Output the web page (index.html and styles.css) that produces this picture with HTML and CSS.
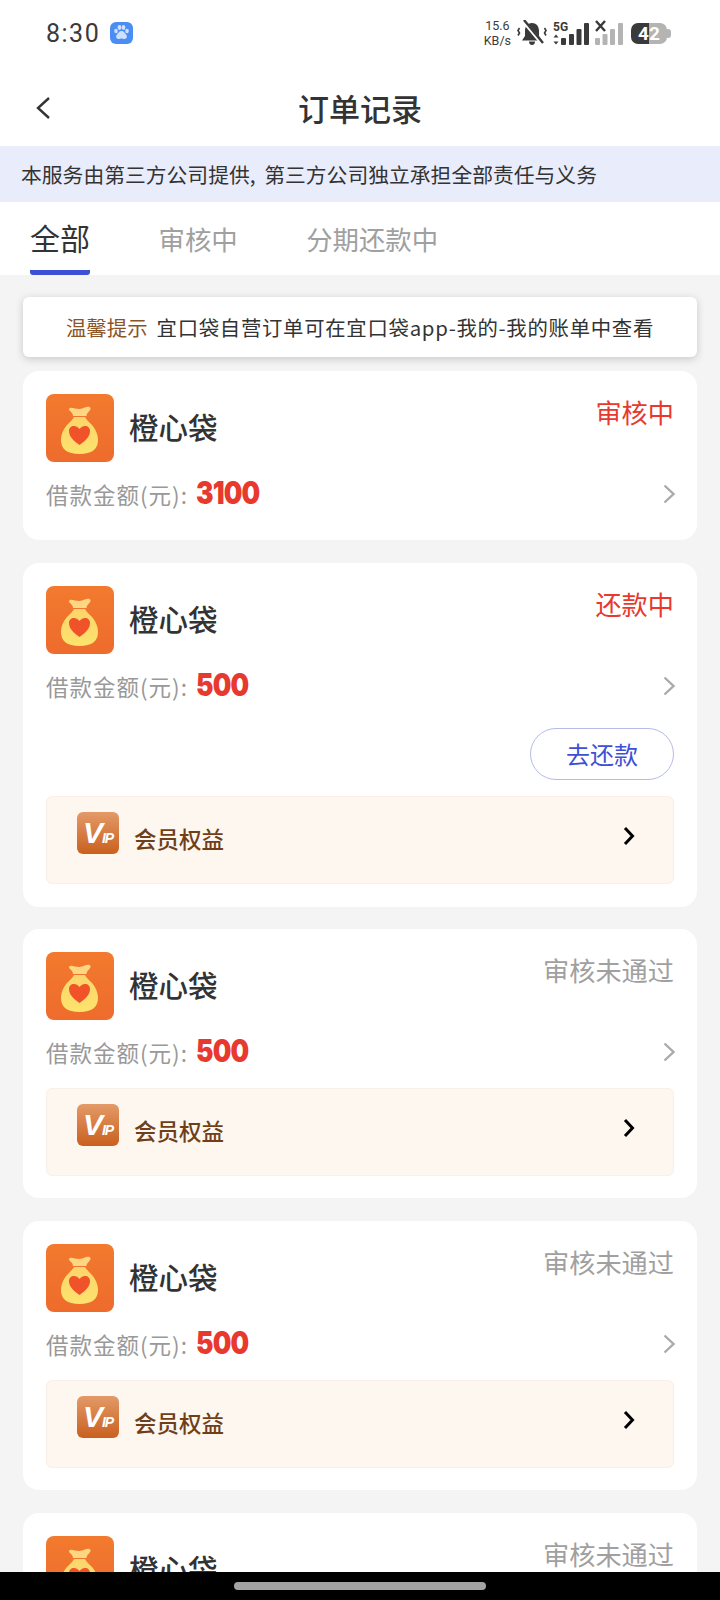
FILE: index.html
```html
<!DOCTYPE html>
<html lang="zh-CN">
<head>
<meta charset="utf-8">
<title>订单记录</title>
<link rel="stylesheet" href="styles.css">
</head>
<body>
<svg class="defs" width="0" height="0">
  <defs>
    <linearGradient id="bagfill" x1="0" y1="0" x2="0" y2="1">
      <stop offset="0" stop-color="#fbd56c"/>
      <stop offset="1" stop-color="#fde36c"/>
    </linearGradient>
    <symbol id="bag" viewBox="0 0 68 68">
      <path d="M24 14c2-1 5 1 9.500 1s6.500-3 10-2c2 1 1 3-1 5-1 1-2 2-2 4H27c0-2-1-3-2-4-2-2-3-3-1-4z" fill="#fcd680"/>
      <path d="M28 23h11c1 2 3 4 6 7 4 4 7 10 7 16 0 9-6 14-18.500 14S15 55 15 46c0-6 3-12 7-16 3-3 5-5 6-7z" fill="url(#bagfill)"/>
      <path d="M33.500 51C28 47 23 43 23 37c0-3 2-5 5-5 2 0 4 1 5.500 3 1.500-2 3.500-3 5.500-3 3 0 5 2 5 5 0 6-5 10-10.500 14z" fill="#f0532a"/>
    </symbol>
    <symbol id="chev" viewBox="0 0 12 20">
      <path d="M1.500 1.500l9 8.500-9 8.500" fill="none" stroke="currentColor" stroke-width="2.400"/>
    </symbol>
    <symbol id="chev-bold" viewBox="0 0 12 20">
      <path d="M2 2l7.500 8L2 18" fill="none" stroke="currentColor" stroke-width="3"/>
    </symbol>
  </defs>
</svg>

<div class="status">
  <div class="status-left">
    <span class="clock">8:30</span>
    <svg class="paw" width="23" height="22" viewBox="0 0 23 22">
      <rect width="23" height="22" rx="6" fill="#4a8ef4"/>
      <ellipse cx="6" cy="9" rx="1.800" ry="2.300" fill="#cfe0fc"/>
      <ellipse cx="9.500" cy="5.500" rx="1.900" ry="2.400" fill="#cfe0fc"/>
      <ellipse cx="13.500" cy="5.500" rx="1.900" ry="2.400" fill="#cfe0fc"/>
      <ellipse cx="17" cy="9" rx="1.800" ry="2.300" fill="#cfe0fc"/>
      <path d="M11.500 9c2.500 0 3 2 4.500 3.500 1.500 1.500 1 4.500-1.500 4.500-1.200 0-2-.5-3-.5s-1.800.5-3 .5C6 17 5.500 14 7 12.500 8.500 11 9 9 11.500 9z" fill="#cfe0fc"/>
    </svg>
  </div>
  <div class="status-right">
    <div class="speed"><span>15.6</span><span>KB/s</span></div>
    <svg width="30" height="26" viewBox="0 0 30 26">
      <path d="M15 3c5 0 7 4 7 8v5l3 4.500H5L8 16v-5c0-4 2-8 7-8z" fill="#3a3a3a"/>
      <path d="M12 21.500h6c0 2-1 3.500-3 3.500s-3-1.500-3-3.500z" fill="#3a3a3a"/>
      <path d="M5.500 0l20 24" stroke="#fff" stroke-width="3.600"/>
      <path d="M7 0l19 23" stroke="#3a3a3a" stroke-width="2.400"/>
      <path d="M2.500 8L1 10.500 2.500 13 1 15.500M27.500 8l1.500 2.500-1.500 2.500 1.500 2.500" fill="none" stroke="#3a3a3a" stroke-width="1.600"/>
    </svg>
    <svg width="36" height="26" viewBox="0 0 36 26">
      <text class="net" x="0" y="11">5G</text>
      <path d="M3 14.500l2.500 3h-5zM3 24.500l-2.500-3h5z" fill="#3a3a3a"/>
      <rect x="8" y="18" width="5" height="7" rx="1" fill="#3a3a3a"/>
      <rect x="16" y="14" width="5" height="11" rx="1" fill="#3a3a3a"/>
      <rect x="23.500" y="9" width="5" height="16" rx="1" fill="#3a3a3a"/>
      <rect x="31" y="3" width="5" height="22" rx="1" fill="#3a3a3a"/>
    </svg>
    <svg width="28" height="26" viewBox="0 0 28 26">
      <path d="M1 1l9 10M10 1L1 11" stroke="#3a3a3a" stroke-width="2.400"/>
      <rect x="0" y="18" width="5" height="7" rx="1" fill="#b4b4b4"/>
      <rect x="7.500" y="14" width="5" height="11" rx="1" fill="#b4b4b4"/>
      <rect x="15" y="9" width="5" height="16" rx="1" fill="#b4b4b4"/>
      <rect x="23" y="3" width="5" height="22" rx="1" fill="#b4b4b4"/>
    </svg>
    <div class="battery"><span class="battery-num">42</span></div>
  </div>
</div>

<div class="nav">
  <svg class="back" width="16" height="24" viewBox="0 0 16 24">
    <path d="M14 2L3 12l11 10" fill="none" stroke="#333" stroke-width="2.400"/>
  </svg>
  <span class="nav-title">订单记录</span>
</div>

<div class="banner">本服务由第三方公司提供, 第三方公司独立承担全部责任与义务</div>

<div class="tabs">
  <div class="tab tab-on">全部</div>
  <div class="tab">审核中</div>
  <div class="tab">分期还款中</div>
</div>

<div class="list">
  <div class="notice"><span class="notice-tag">温馨提示</span>宜口袋自营订单可在宜口袋app-我的-我的账单中查看</div>

  <div class="card card-plain">
    <div class="card-head">
      <div class="logo"><svg width="68" height="68"><use href="#bag"/></svg></div>
      <span class="name">橙心袋</span>
      <span class="state state-red">审核中</span>
    </div>
    <div class="amount">
      <span class="amount-label">借款金额(元):</span><span class="amount-num">3100</span>
      <svg class="more" width="12" height="20"><use href="#chev"/></svg>
    </div>
  </div>

  <div class="card card-pay">
    <div class="card-head">
      <div class="logo"><svg width="68" height="68"><use href="#bag"/></svg></div>
      <span class="name">橙心袋</span>
      <span class="state state-red">还款中</span>
    </div>
    <div class="amount">
      <span class="amount-label">借款金额(元):</span><span class="amount-num">500</span>
      <svg class="more" width="12" height="20"><use href="#chev"/></svg>
    </div>
    <div class="actions"><div class="btn">去还款</div></div>
    <div class="vip">
      <div class="vip-icon"><span class="vip-v">V</span><span class="vip-ip">IP</span></div>
      <span class="vip-text">会员权益</span>
      <svg class="vip-more" width="12" height="20"><use href="#chev-bold"/></svg>
    </div>
  </div>

  <div class="card">
    <div class="card-head">
      <div class="logo"><svg width="68" height="68"><use href="#bag"/></svg></div>
      <span class="name">橙心袋</span>
      <span class="state">审核未通过</span>
    </div>
    <div class="amount">
      <span class="amount-label">借款金额(元):</span><span class="amount-num">500</span>
      <svg class="more" width="12" height="20"><use href="#chev"/></svg>
    </div>
    <div class="vip">
      <div class="vip-icon"><span class="vip-v">V</span><span class="vip-ip">IP</span></div>
      <span class="vip-text">会员权益</span>
      <svg class="vip-more" width="12" height="20"><use href="#chev-bold"/></svg>
    </div>
  </div>

  <div class="card">
    <div class="card-head">
      <div class="logo"><svg width="68" height="68"><use href="#bag"/></svg></div>
      <span class="name">橙心袋</span>
      <span class="state">审核未通过</span>
    </div>
    <div class="amount">
      <span class="amount-label">借款金额(元):</span><span class="amount-num">500</span>
      <svg class="more" width="12" height="20"><use href="#chev"/></svg>
    </div>
    <div class="vip">
      <div class="vip-icon"><span class="vip-v">V</span><span class="vip-ip">IP</span></div>
      <span class="vip-text">会员权益</span>
      <svg class="vip-more" width="12" height="20"><use href="#chev-bold"/></svg>
    </div>
  </div>

  <div class="card">
    <div class="card-head">
      <div class="logo"><svg width="68" height="68"><use href="#bag"/></svg></div>
      <span class="name">橙心袋</span>
      <span class="state">审核未通过</span>
    </div>
  </div>
</div>

<div class="homebar"><div class="home-pill"></div></div>
</body>
</html>
```

FILE: styles.css
```css
html, body {
	margin: 0;
	padding: 0;
}

body {
	position: relative;
	width: 720px;
	height: 1600px;
	overflow: hidden;
	background: #f4f4f4;
	color: #333;
	font-family: "Noto Sans CJK SC", "Noto Sans", sans-serif;
}

.defs {
	position: absolute;
}

/* status bar */
.status {
	display: flex;
	justify-content: space-between;
	align-items: center;
	height: 66px;
	padding: 0 49px 0 46px;
	box-sizing: border-box;
	background: #fff;
}

.status-left {
	display: flex;
	align-items: center;
	gap: 10px;
}

.clock {
	font-family: Roboto, sans-serif;
	font-size: 25px;
	letter-spacing: 1.500px;
	color: #3a3a3a;
}

.status-right {
	display: flex;
	align-items: center;
	gap: 6px;
}

.speed {
	display: flex;
	flex-direction: column;
	align-items: center;
	font-family: Roboto, sans-serif;
	font-size: 12.500px;
	line-height: 15px;
	color: #3a3a3a;
}

.net {
	font-family: Roboto, sans-serif;
	font-size: 12px;
	font-weight: 700;
	fill: #3a3a3a;
}

.battery {
	position: relative;
	display: flex;
	justify-content: center;
	align-items: center;
	width: 36px;
	height: 21px;
	margin: 0 4px 0 2px;
	border-radius: 7px;
	background: linear-gradient(90deg, #3a3a3a 0 50%, #b4b4b4 50% 100%);
}

.battery::after {
	content: "";
	position: absolute;
	right: -4px;
	top: 6px;
	width: 4px;
	height: 9px;
	border-radius: 0 3px 3px 0;
	background: #b4b4b4;
}

.battery-num {
	font-family: Roboto, sans-serif;
	font-size: 19px;
	font-weight: 700;
	line-height: 21px;
	color: #fff;
}

/* nav */
.nav {
	position: relative;
	display: flex;
	justify-content: center;
	align-items: center;
	height: 80px;
	background: #fff;
}

.back {
	position: absolute;
	left: 35px;
	top: 30px;
}

.nav-title {
	margin-top: 4px;
	font-size: 31px;
	font-weight: 500;
	line-height: 40px;
}

.banner {
	height: 56px;
	padding-left: 21px;
	background: #e9edfb;
	font-size: 20.800px;
	line-height: 56px;
	word-spacing: 4px;
	color: #333;
	white-space: nowrap;
}

/* tabs */
.tabs {
	display: flex;
	height: 73px;
	padding-left: 30px;
	gap: 68.500px;
	background: #fff;
}

.tab {
	height: 73px;
	padding-top: 17px;
	box-sizing: border-box;
	font-size: 26.400px;
	line-height: 40px;
	color: #a0a0a0;
}

.tab-on {
	font-size: 30px;
	line-height: 36px;
	color: #333;
	border-bottom: 5px solid #3d4fd6;
	border-radius: 0 0 3px 3px;
}

/* list */
.list {
	display: flex;
	flex-direction: column;
	gap: 23px;
	padding: 22px 23px 0;
}

.notice {
	height: 60px;
	margin-bottom: -9px;
	border-radius: 6px;
	background: #fff;
	box-shadow: 0 2px 8px rgba(0, 0, 0, .18);
	font-size: 20.400px;
	letter-spacing: .7px;
	line-height: 60px;
	text-align: center;
	white-space: nowrap;
}

.notice-tag {
	margin-right: 9px;
	letter-spacing: 0;
	color: #8a5426;
}

.card {
	flex-shrink: 0;
	padding: 23px 23px 22px;
	border-radius: 16px;
	background: #fff;
}

.card-plain {
	padding-bottom: 26px;
}

.card-pay {
	margin-bottom: -1px;
	padding-bottom: 23px;
}

.card-head {
	display: flex;
	height: 68px;
}

.logo {
	width: 68px;
	height: 68px;
	border-radius: 8px;
	background: linear-gradient(180deg, #f27a2e, #ee6b2c);
}

.logo svg {
	display: block;
}

.name {
	margin-left: 15px;
	font-size: 29.500px;
	font-weight: 500;
	line-height: 64px;
}

.state {
	margin-left: auto;
	font-size: 26.200px;
	line-height: 36px;
	color: #a0a0a0;
}

.state-red {
	color: #e8392f;
}

.amount {
	display: flex;
	align-items: center;
	height: 40px;
	margin-top: 12px;
}

.amount-label {
	font-size: 22.500px;
	letter-spacing: 1px;
	color: #999;
}

.amount-num {
	display: inline-block;
	margin: 0 0 4px 8px;
	font-family: Inter, sans-serif;
	font-size: 32px;
	font-weight: 900;
	letter-spacing: -1px;
	color: #e8392f;
	transform: scaleX(.82);
	transform-origin: left center;
}

.more {
	margin: 0 -1px 0 auto;
	color: #aaa;
}

.actions {
	display: flex;
	justify-content: flex-end;
	margin-top: 22px;
}

.btn {
	width: 144px;
	height: 52px;
	box-sizing: border-box;
	border: 1.500px solid #b5bce8;
	border-radius: 26px;
	font-size: 24px;
	line-height: 49px;
	text-align: center;
	color: #3d4fd6;
}

.vip {
	display: flex;
	align-items: flex-start;
	height: 88px;
	margin-top: 16px;
	padding: 15px 38px 0 30px;
	box-sizing: border-box;
	border: 1px solid #f9efe6;
	border-radius: 6px;
	background: #fdf7f0;
}

.vip-icon {
	display: flex;
	align-items: baseline;
	justify-content: center;
	width: 42px;
	height: 42px;
	border-radius: 6px;
	background: linear-gradient(180deg, #e39a68, #c9601f);
	font-family: "Liberation Sans", sans-serif;
	font-style: italic;
	font-weight: 700;
	line-height: 42px;
	letter-spacing: -1px;
	color: #fff;
}

.vip-v {
	font-size: 30px;
}

.vip-ip {
	font-size: 14px;
}

.vip-text {
	margin: 10px 0 0 15px;
	font-size: 22.500px;
	font-weight: 500;
	line-height: 32px;
	color: #6f3f1a;
}

.vip-more {
	margin: 14px 0 0 auto;
	color: #000;
}

/* gesture bar, sits over the list */
.homebar {
	position: absolute;
	left: 0;
	right: 0;
	bottom: 0;
	display: flex;
	justify-content: center;
	padding-top: 10px;
	height: 28px;
	box-sizing: border-box;
	background: #000;
}

.home-pill {
	width: 252px;
	height: 8px;
	border-radius: 4px;
	background: #a3a3a3;
}
```
